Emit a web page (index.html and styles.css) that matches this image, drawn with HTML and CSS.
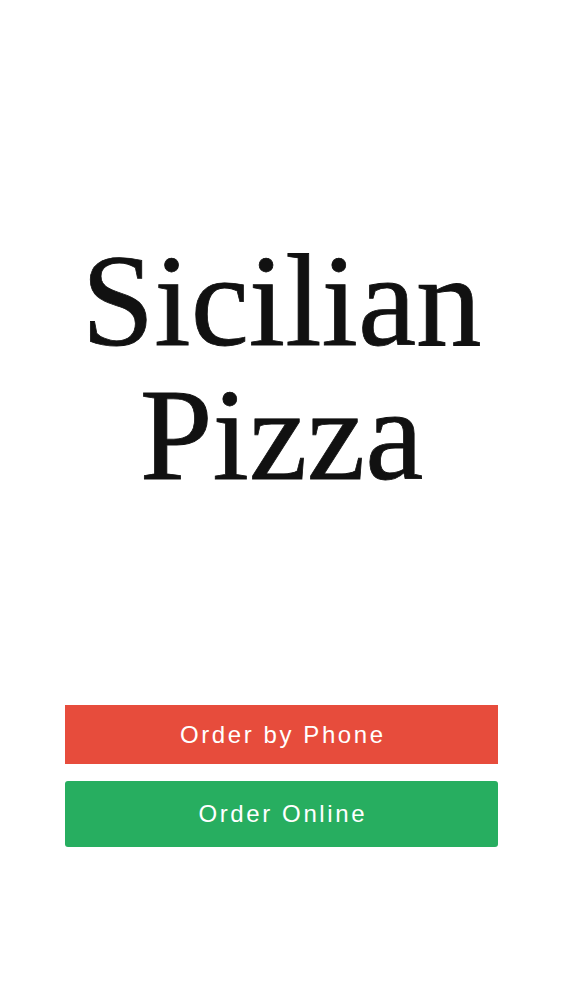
FILE: index.html
```html
<!DOCTYPE html>
<html lang="en">
<head>
    <meta charset="UTF-8">
    <meta name="viewport" content="width=device-width, initial-scale=1.0">
    <title>Sicilian Pizza</title>
    <link rel="stylesheet" href="styles.css">
</head>
<body>
    <div class="page">
        <!-- Logo -->
        <h1 class="title">Sicilian<br>Pizza</h1>

        <!-- Botoes -->
        <div class="actions">
            <a class="button button-phone" href="#">Order by Phone</a>
            <a class="button button-online" href="#">Order Online</a>
        </div>
    </div>
</body>
</html>
```

FILE: styles.css
```css
body {
    margin: 0;
    background-color: #fff;
    font-family: "Liberation Sans", Arial, sans-serif;
}
.page {
    display: flex;
    flex-direction: column;
    align-items: center;
    padding-top: 234px;
}
.title {
    margin: 0;
    font-family: "Liberation Serif", "Times New Roman", serif;
    font-weight: normal;
    font-size: 131px;
    line-height: 134px;
    color: #111;
    -webkit-text-stroke: 0.8px #111;
    text-align: center;
}
.actions {
    display: flex;
    flex-direction: column;
    gap: 17px;
    width: 433px;
    margin-top: 203px;
}
.button {
    display: flex;
    align-items: center;
    justify-content: center;
    color: #fff;
    font-size: 24px;
    letter-spacing: 2.6px;
    padding-left: 2.6px;
    text-decoration: none;
}
.button-phone {
    height: 59px;
    background-color: #e74c3c;
}
.button-online {
    height: 66px;
    background-color: #27ae60;
    border-radius: 3px;
}
```
